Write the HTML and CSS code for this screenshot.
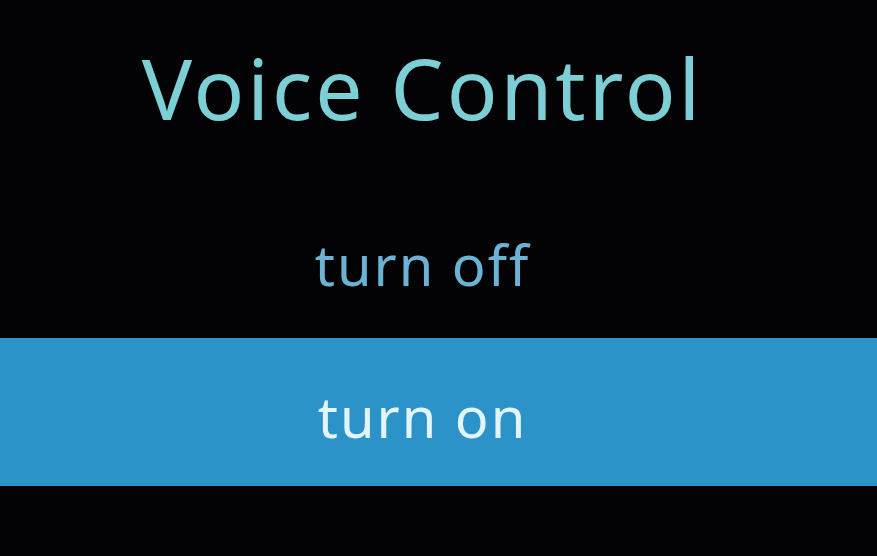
FILE: index.html
```html
<!doctype html>
<html lang="en">
  <head>
    <meta charset="UTF-8" />
    <meta name="viewport" content="width=device-width, initial-scale=1.0" />
    <title>Voice Control</title>
    <link rel="stylesheet" href="styles.css">
  </head>
  <body>
    <div class="screen">
      <h1 class="title">Voice Control</h1>

      <ul class="menu">
        <li class="menu-item">turn off</li>
        <li class="menu-item selected">turn on</li>
      </ul>
    </div>
  </body>
</html>
```

FILE: styles.css
```css
body {
  margin: 0;
  background: #030305;
  font-family: "Noto Sans", "Open Sans", sans-serif;
}
.screen {
  height: 556px;
  display: flex;
  flex-direction: column;
}
.title {
  margin: 0;
  height: 190px;
  padding: 38px 32px 0 0;
  box-sizing: border-box;
  font-size: 84px;
  font-weight: normal;
  letter-spacing: 3px;
  line-height: 100px;
  text-align: center;
  color: #7ccfd5;
}
.menu {
  list-style: none;
  margin: 0;
  padding: 0;
}
.menu-item {
  height: 148px;
  box-sizing: border-box;
  padding-right: 32px;
  font-size: 56px;
  letter-spacing: 2px;
  line-height: 148px;
  text-align: center;
  color: #6ab3d4;
}
.menu-item.selected {
  padding-top: 8px;
  line-height: 140px;
  background: #2b93c8;
  color: #e2f5fb;
}
```
